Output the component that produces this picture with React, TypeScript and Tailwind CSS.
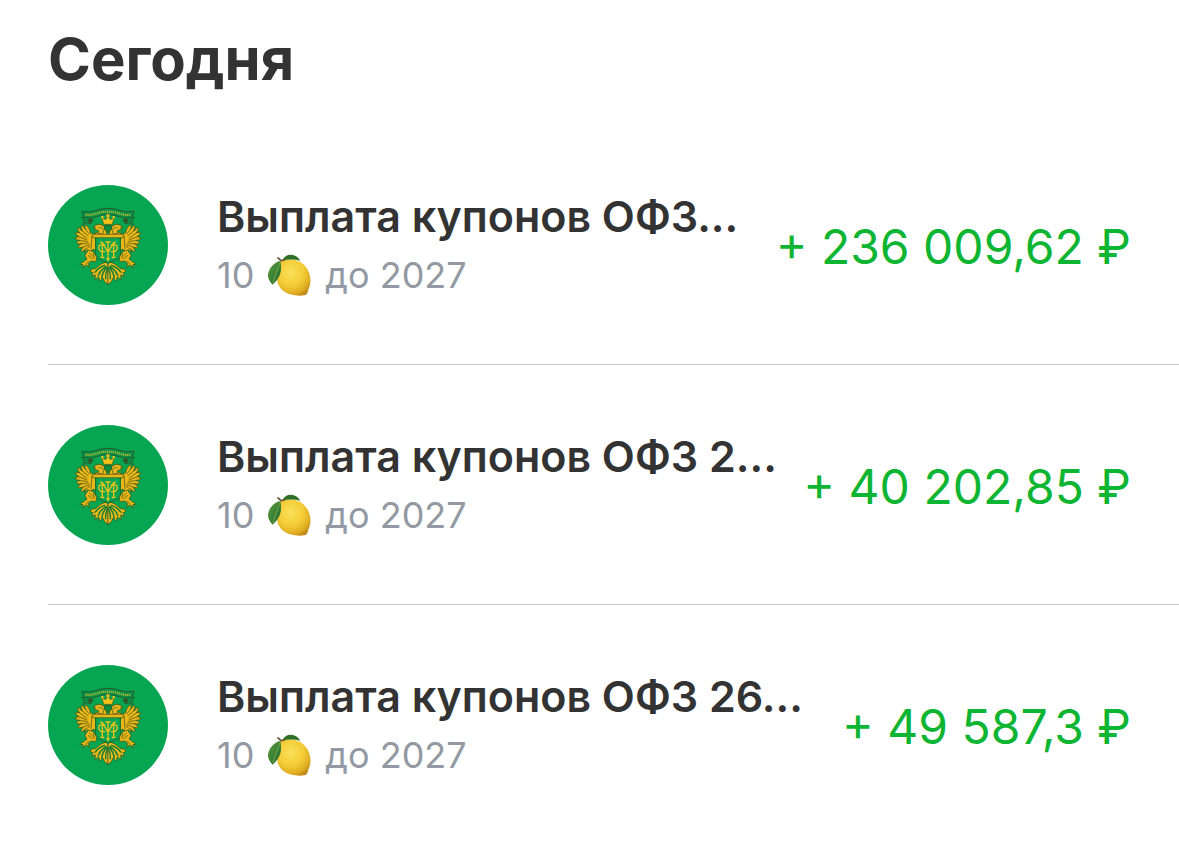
type Payout = {
  id: number;
  title: string;
  amount: string;
};

const payouts: Payout[] = [
  { id: 1, title: 'Выплата купонов ОФЗ...', amount: '+ 236 009,62 ₽' },
  { id: 2, title: 'Выплата купонов ОФЗ 2...', amount: '+ 40 202,85 ₽' },
  { id: 3, title: 'Выплата купонов ОФЗ 26...', amount: '+ 49 587,3 ₽' },
];

// One half of the eagle, the other half is its mirror image
function EagleHalf() {
  return (
    <g stroke="#3d4a1a" strokeWidth="2" strokeLinejoin="round" strokeLinecap="round">
      {/* wing */}
      <path
        fill="#e9b818"
        d="M164 178 L152 174 L148 162 L140 150 L134 153 L137 163 L127 152 L122 155 L127 168 L114 157 L112 162 L119 174 L107 171 L108 178 L117 185 L106 187 L109 194 L119 196 L109 202 L113 207 L124 206 L114 214 L118 219 L129 216 L122 227 L128 229 L137 221 L133 232 L144 224 L148 232 L158 223 L168 226 Z"
      />
      <path
        fill="none"
        d="M127 168 L143 181 M119 174 L140 189 M117 186 L140 194 M119 197 L142 199 M124 207 L145 204 M130 216 L148 209 M137 163 L149 178 M156 182 L153 220 M140 221 L150 213"
      />
      {/* neck and head */}
      <path
        fill="#e9b818"
        d="M201 179 L198 164 L190 152 L180 148 L171 149 L159 156 L168 160 L162 166 L174 165 L177 171 L163 175 L172 182 Z"
      />
      <path fill="none" d="M184 156 L190 166 L190 174 M176 157 L180 159 M172 174 L188 177" />
      {/* claw */}
      <path
        fill="#e9b818"
        d="M147 226 L160 230 L171 247 L167 260 L152 258 L145 266 L148 277 L138 269 L129 280 L130 269 L119 268 L131 260 L141 252 L135 242 L139 234 Z"
      />
      <path fill="none" d="M148 234 L157 243 M145 242 L157 252 M138 266 L146 259 M160 236 L162 250" />
      {/* tail feathers */}
      <path
        fill="#e9b818"
        d="M203 262 L192 263 L180 269 L167 281 L156 282 L150 290 L160 293 L154 304 L166 300 L165 313 L176 306 L179 318 L189 309 L194 320 L204 328 Z"
      />
      <path
        fill="none"
        stroke="#087c3c"
        strokeWidth="4"
        d="M194 271 Q177 276 166 291 M196 275 Q180 287 174 302 M200 276 Q187 292 185 309 M202 281 Q196 295 197 311"
      />
      {/* ribbon end */}
      <path fill="#07914a" d="M137 126 L124 127 L133 137 L128 150 L139 143 L151 147 L155 134 Z" />
      <path fill="#235f2e" d="M148 132 L160 135 L152 145 L146 140 Z" />
    </g>
  );
}

function MinfinEmblem() {
  return (
    <svg viewBox="24 30 360 360" className="size-[120px] shrink-0" role="img" aria-label="Минфин">
      <circle cx="204" cy="210" r="180" fill="#05a551" />
      <EagleHalf />
      <g transform="translate(408 0) scale(-1 1)">
        <EagleHalf />
      </g>
      {/* ribbon */}
      <path
        d="M125 109 Q148 113 168 106 Q184 100 204 100 Q224 100 240 106 Q260 113 283 109 L276 128 Q258 132 238 125 Q221 119 204 119 Q187 119 170 125 Q150 132 132 128 Z"
        fill="#07914a"
        stroke="#235f2e"
        strokeWidth="3"
      />
      <path
        d="M136 119 Q153 122 170 115 Q187 110 204 110 Q221 110 238 115 Q255 122 272 119"
        fill="none"
        stroke="#a9b52c"
        strokeWidth="6"
        strokeDasharray="4 2"
      />
      {/* crown */}
      <path
        d="M191 148 L186 128 L197 134 L204 122 L211 134 L222 128 L217 148 Z"
        fill="#f3c319"
        stroke="#4d5419"
        strokeWidth="2"
      />
      <circle cx="187" cy="127" r="4" fill="#f3c319" />
      <circle cx="204" cy="122" r="5" fill="#f3c319" />
      <circle cx="221" cy="127" r="4" fill="#f3c319" />
      <path d="M195 152 L213 152 L216 163 L204 171 L192 163 Z" fill="#078f42" stroke="#3d4a1a" strokeWidth="2" />
      {/* shield */}
      <path
        d="M167 184 L241 184 L241 238 Q240 250 225 255 Q211 259 204 266 Q197 259 183 255 Q168 250 167 238 Z"
        fill="#05a551"
        stroke="#176b31"
        strokeWidth="3"
      />
      <path d="M158 178 H250 V188 H158 Z" fill="#e9b818" stroke="#4d5419" strokeWidth="2" />
      {/* monogram */}
      <path
        d="M180 202 H187 L204 232 L221 202 H228 M187 202 V246 M221 202 V246 M181 247 H193 M215 247 H227 M204 200 V252 M196 201 H212"
        fill="none"
        stroke="#e9c21b"
        strokeWidth="4"
      />
      <path
        d="M196 210 Q177 205 176 219 Q177 233 196 229 M212 210 Q231 205 232 219 Q231 233 212 229"
        fill="none"
        stroke="#e9c21b"
        strokeWidth="4"
      />
      <path d="M198 249 L204 260 L210 249 Z" fill="#e9c21b" />
    </svg>
  );
}

function Lemon() {
  return (
    <svg viewBox="24 24 135 132" className="h-11 w-[45px] shrink-0" role="img" aria-label="лимон">
      <defs>
        <radialGradient id="lemon-body" cx="0.42" cy="0.35" r="0.75">
          <stop offset="0" stopColor="#fbe05a" />
          <stop offset="0.5" stopColor="#f3cc35" />
          <stop offset="0.8" stopColor="#dfab20" />
          <stop offset="1" stopColor="#b57c12" />
        </radialGradient>
        <linearGradient id="lemon-leaf" x1="0" y1="0" x2="1" y2="1">
          <stop offset="0" stopColor="#5b9c40" />
          <stop offset="1" stopColor="#23692a" />
        </linearGradient>
      </defs>
      <path
        d="M64 49 C82 40 113 42 131 56 C148 70 156 91 154 113 C153 121 150 128 147 137 C145 146 142 150 134 151 C124 153 115 152 103 150 C79 147 59 131 55 109 C50 86 52 57 64 49 Z"
        fill="url(#lemon-body)"
      />
      <path d="M70 45 C78 30 94 26 108 32 C117 36 121 42 124 47 C106 42 88 44 70 45 Z" fill="#2f7029" />
      <path
        d="M64 48 C47 51 30 68 27 88 C26 100 33 112 41 119 C52 109 66 92 66 72 C66 61 66 54 64 48 Z"
        fill="url(#lemon-leaf)"
      />
      <path d="M63 52 C56 73 48 94 41 114" fill="none" stroke="#87b957" strokeWidth="2" />
      <path d="M57 39 L67 47 L77 45" fill="none" stroke="#665438" strokeWidth="5" strokeLinecap="round" />
    </svg>
  );
}

function PayoutRow({ payout }: { payout: Payout }) {
  return (
    <li className="flex items-center border-b border-[#c8c8ca] pt-[60px] pb-[59px] pr-12 last:border-b-0">
      <MinfinEmblem />
      <div className="ml-[49px] min-w-0">
        <h2 className="whitespace-nowrap text-[43px] leading-[60px] font-semibold">{payout.title}</h2>
        <p className="flex items-center gap-[13px] text-[36px] leading-[58px] text-[#9299a2]">
          <span>10</span>
          <Lemon />
          <span>до 2027</span>
        </p>
      </div>
      <p className="ml-auto whitespace-nowrap pt-1 text-[48px] leading-[60px] text-[#0db533]">{payout.amount}</p>
    </li>
  );
}

export default function App() {
  return (
    <main className="min-h-screen bg-white pl-12 font-['Inter',sans-serif] text-[#333333]">
      <h1 className="pt-6 pb-[31px] text-[58px] leading-[70px] font-bold">Сегодня</h1>
      <ul>
        {payouts.map((payout) => (
          <PayoutRow key={payout.id} payout={payout} />
        ))}
      </ul>
    </main>
  );
}
